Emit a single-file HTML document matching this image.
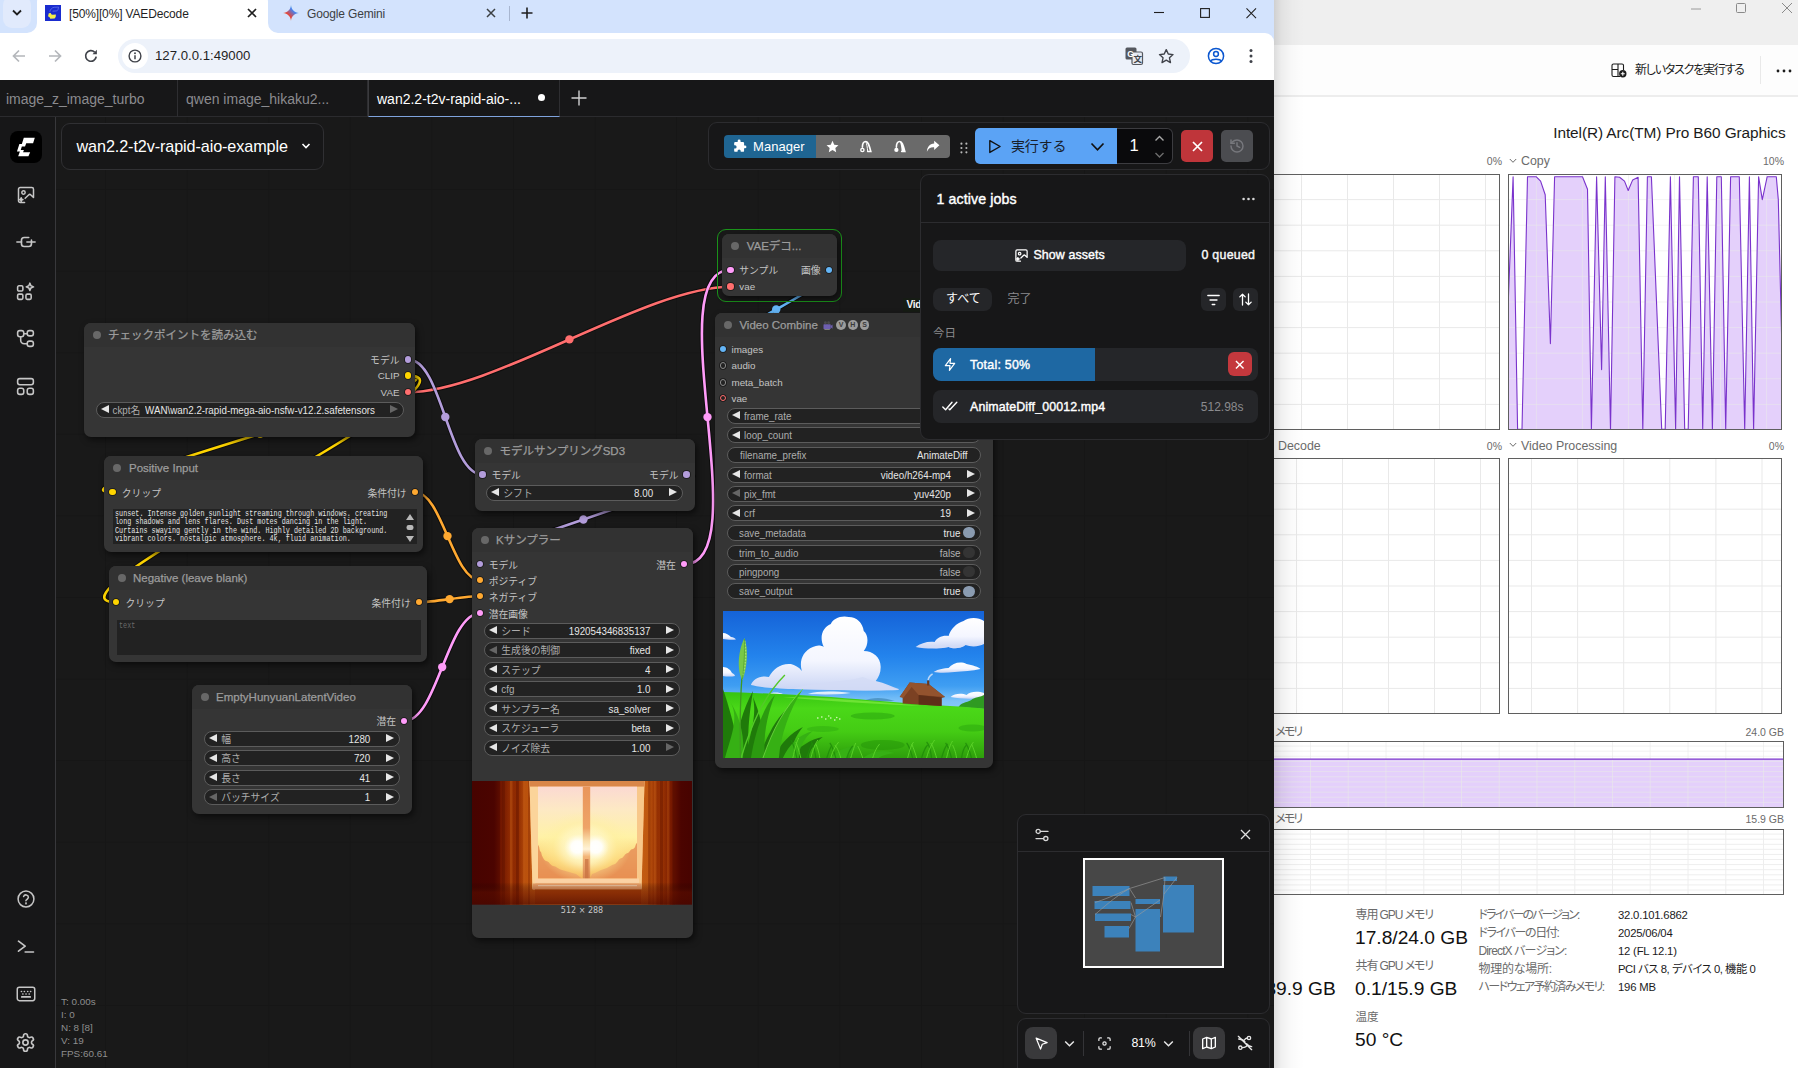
<!DOCTYPE html>
<html lang="ja">
<head>
<meta charset="utf-8">
<title>[50%][0%] VAEDecode</title>
<style>
*{box-sizing:border-box;margin:0;padding:0}
html,body{width:1798px;height:1068px;overflow:hidden;background:#fff}
body{font-family:"Liberation Sans","Noto Sans CJK JP",sans-serif;position:relative;color:#ddd}
.abs{position:absolute}
svg{position:absolute;overflow:visible}
/* ---------- chrome browser ---------- */
#browser{position:absolute;left:0;top:0;width:1274px;height:1068px;overflow:hidden;background:#191919}
#tabstrip{position:absolute;left:0;top:0;width:1274px;height:46px;background:#d3e3fd}
#navbar{position:absolute;left:0;top:33px;width:1274px;height:47px;background:#fff;border-radius:0 0 0 0}
#omni{position:absolute;left:118px;top:39px;width:1072px;height:34px;border-radius:17px;background:#edf2fa}
.ctab{position:absolute;top:0;height:33px;font-size:12px;letter-spacing:-.15px;color:#1f1f1f;line-height:28px;white-space:nowrap}
/* ---------- comfy ---------- */
#ctabs{position:absolute;left:0;top:80px;width:1274px;height:37px;background:#171718;border-bottom:1px solid #2b2b2e}
.wtab{position:absolute;top:0;height:37px;line-height:38px;font-size:14px;color:#8b8b8f;white-space:nowrap;border-right:1px solid #2e2e31}
#side{position:absolute;left:0;top:117px;width:56px;height:951px;background:#171718;border-right:1px solid #38383b}
#canvas{position:absolute;left:56px;top:117px;width:1218px;height:951px;background:#191919;overflow:hidden}
.ta{background:#222;overflow:hidden}
.mono{position:absolute;left:2px;top:1px;font-family:"Liberation Mono",monospace;font-size:9.2px;line-height:8.3px;color:#e4e4e4;white-space:nowrap;transform:scaleX(.7375);transform-origin:0 0}
.node{position:absolute;background:#353535;border-radius:7px;box-shadow:2px 3px 6px rgba(0,0,0,.55)}
.nh{position:absolute;left:0;top:0;right:0;height:24px;background:#323232;border-radius:7px 7px 0 0;font-size:11.5px;color:#9c9c9c;-webkit-text-stroke:.25px #9c9c9c;line-height:24px;white-space:nowrap}
.nh i{position:absolute;left:9px;top:8px;width:8px;height:8px;border-radius:50%;background:#686868}
.nh span{position:absolute;left:25px;top:0}
.w{position:absolute;height:16px;border-radius:8px;background:#222;border:1px solid #5c5c5c;font-size:9.8px;line-height:15.6px;color:#adadad;white-space:nowrap}
.w span{transform:scaleY(1.1);transform-origin:50% 56%}
.w .l{position:absolute;left:14px;top:0}
.w .v{position:absolute;right:24px;top:0;color:#e6e6e6}
.w .al,.w .ar{position:absolute;top:2.4px;width:0;height:0;border-top:4.6px solid transparent;border-bottom:4.6px solid transparent}
.w .al{left:4px;border-right:8.4px solid #e6e6e6}
.w .ar{right:4.6px;border-left:8.4px solid #e6e6e6}
.w .dim{opacity:.35}
.slot{position:absolute;font-size:9.8px;color:#c4c4c4;line-height:12px;white-space:nowrap}
.dot{position:absolute;width:6.4px;height:6.4px;border-radius:50%;box-shadow:0 0 0 .8px rgba(0,0,0,.55)}
/* ---------- task manager ---------- */
#tm{position:absolute;left:1274px;top:0;width:524px;height:1068px;background:#fff;overflow:hidden;color:#1b1b1b;font-family:"Liberation Sans","Noto Sans CJK JP",sans-serif}
#tmtitle{position:absolute;left:0;top:0;width:524px;height:45px;background:#efefef}
#tmbar{position:absolute;left:0;top:45px;width:524px;height:52px;background:#fdfdfd;border-bottom:2px solid #ededed}
.tl{position:absolute;white-space:nowrap}
.chart{position:absolute;border:1px solid #5f5f5f;background:#fff;overflow:hidden}
.sb{-webkit-text-stroke:.35px currentColor}
</style>
</head>
<body>
<div id="browser">

  <div id="tabstrip">
    <div class="abs" style="left:3px;top:-4px;width:28px;height:32px;border-radius:9px;background:#e1eafc"></div>
    <svg style="left:11px;top:8px" width="12" height="10" viewBox="0 0 12 10"><path d="M2 2.5 L6 6.5 L10 2.5" fill="none" stroke="#1f1f1f" stroke-width="1.8"/></svg>
    <!-- active tab -->
    <div class="abs" style="left:37px;top:-8px;width:231px;height:41px;border-radius:10px 10px 0 0;background:#fff"></div>
    <svg style="left:27px;top:23px" width="10" height="10"><path d="M10 0 V10 H0 A10 10 0 0 0 10 0Z" fill="#fff"/></svg>
    <svg style="left:268px;top:23px" width="10" height="10"><path d="M0 0 V10 H10 A10 10 0 0 1 0 0Z" fill="#fff"/></svg>
    <!-- favicon -->
    <svg style="left:45px;top:5px" width="16" height="16" viewBox="0 0 16 16"><rect width="16" height="16" fill="#1a2ccf"/><path d="M3.800 8.300 L5.800 8 L6.200 9.300 L7.600 9.700 L10.900 9.600 L10.700 12 L9.600 13.600 L5.300 13.800 L4.600 12.200 L3 11.200 Z" fill="#f2ee4a"/><path d="M4.800 6.800 C5.400 4.400 6.800 2.600 9.200 2.300 L13.600 2.100 L13 4.600 C12.500 5.800 11.600 6 10.200 6 L7.600 6.200" fill="none" stroke="#5f70ea" stroke-width=".8"/></svg>
    <div class="ctab" style="left:69px">[50%][0%] VAEDecode</div>
    <svg style="left:247px;top:8px" width="10" height="10" viewBox="0 0 10 10"><path d="M1 1 L9 9 M9 1 L1 9" stroke="#1f1f1f" stroke-width="1.7"/></svg>
    <!-- gemini tab -->
    <svg style="left:283px;top:5px" width="16" height="16" viewBox="0 0 16 16"><defs><linearGradient id="gg" x1="0" y1="1" x2="1" y2="0"><stop offset="0" stop-color="#f4b400"/><stop offset=".35" stop-color="#ea4335"/><stop offset=".65" stop-color="#4285f4"/><stop offset="1" stop-color="#34a853"/></linearGradient></defs><path d="M8 0 C8.4 4.6 11.4 7.6 16 8 C11.4 8.4 8.4 11.4 8 16 C7.6 11.4 4.6 8.4 0 8 C4.6 7.6 7.6 4.6 8 0Z" fill="url(#gg)"/></svg>
    <div class="ctab" style="left:307px;color:#3c4043">Google Gemini</div>
    <svg style="left:486px;top:8px" width="10" height="10" viewBox="0 0 10 10"><path d="M1 1 L9 9 M9 1 L1 9" stroke="#3c4043" stroke-width="1.5"/></svg>
    <div class="abs" style="left:509px;top:6px;width:1px;height:15px;background:#a8b6d0"></div>
    <svg style="left:521px;top:7px" width="12" height="12" viewBox="0 0 12 12"><path d="M6 0.5 V11.5 M0.5 6 H11.5" stroke="#1f1f1f" stroke-width="1.6"/></svg>
    <!-- window controls -->
    <svg style="left:1154px;top:7px" width="10" height="10" viewBox="0 0 10 10"><path d="M0 5.5 H10" stroke="#1f1f1f" stroke-width="1.1"/></svg>
    <svg style="left:1200px;top:8px" width="10" height="10" viewBox="0 0 10 10"><rect x=".6" y=".6" width="8.8" height="8.8" fill="none" stroke="#1f1f1f" stroke-width="1.1"/></svg>
    <svg style="left:1245.500px;top:7.500px" width="10.500" height="10.500" viewBox="0 0 11 11"><path d="M.5 .5 L10.5 10.5 M10.5 .5 L.5 10.5" stroke="#1f1f1f" stroke-width="1.1"/></svg>
  </div>
  <div id="navbar" style="border-radius:0 9px 0 0">
    <svg style="left:12px;top:16px" width="14" height="14" viewBox="0 0 14 14"><path d="M13 7 H2 M7 1.5 L1.5 7 L7 12.5" fill="none" stroke="#b4b7bb" stroke-width="1.7"/></svg>
    <svg style="left:48px;top:16px" width="14" height="14" viewBox="0 0 14 14"><path d="M1 7 H12 M7 1.5 L12.5 7 L7 12.5" fill="none" stroke="#b4b7bb" stroke-width="1.7"/></svg>
    <svg style="left:84px;top:16px" width="14" height="14" viewBox="0 0 14 14"><path d="M12.2 7.6 A5.3 5.3 0 1 1 10.6 3.1" fill="none" stroke="#40434a" stroke-width="1.7"/><path d="M12.9 0.8 V5.2 H8.5Z" fill="#40434a"/></svg>
  </div>
  <div id="omni">
    <div class="abs" style="left:4px;top:4px;width:26px;height:26px;border-radius:50%;background:#fff"></div>
    <svg style="left:10px;top:10px" width="14" height="14" viewBox="0 0 14 14"><circle cx="7" cy="7" r="5.9" fill="none" stroke="#40434a" stroke-width="1.4"/><path d="M7 6.3 V10.2" stroke="#40434a" stroke-width="1.5"/><circle cx="7" cy="4.2" r=".95" fill="#40434a"/></svg>
    <div class="abs" style="left:37px;top:0;line-height:34px;font-size:13.2px;color:#1f1f1f">127.0.0.1:49000</div>
    <!-- translate icon -->
    <svg style="left:1007px;top:8px" width="18" height="18" viewBox="0 0 18 18"><rect x="0.5" y="0.5" width="11" height="12" rx="1.5" fill="#55585e"/><rect x="7" y="5" width="10.5" height="12.5" rx="1.5" fill="#e6eaf2" stroke="#55585e" stroke-width="1.200"/><text x="2.2" y="10" font-size="8.5" font-weight="700" fill="#fff" font-family="Liberation Sans,sans-serif">G</text><text x="8.6" y="15" font-size="8.5" font-weight="700" fill="#44474c" font-family="Noto Sans CJK JP,sans-serif">文</text></svg>
    <svg style="left:1039.800px;top:8.800px" width="16.500" height="16.500" viewBox="0 0 18 18"><path d="M9 1.8 L11.2 6.6 L16.4 7.2 L12.5 10.7 L13.6 15.9 L9 13.2 L4.4 15.9 L5.5 10.7 L1.6 7.2 L6.8 6.6Z" fill="none" stroke="#40434a" stroke-width="1.5" stroke-linejoin="round"/></svg>
  </div>
  <svg style="left:1207px;top:47px" width="18" height="18" viewBox="0 0 18 18"><circle cx="9" cy="9" r="7.6" fill="none" stroke="#0b57d0" stroke-width="1.5"/><circle cx="9" cy="7" r="2.4" fill="none" stroke="#0b57d0" stroke-width="1.5"/><path d="M3.8 14.2 C5 11.6 13 11.6 14.2 14.2" fill="none" stroke="#0b57d0" stroke-width="1.5"/></svg>
  <svg style="left:1249px;top:48px" width="4" height="16" viewBox="0 0 4 16"><circle cx="2" cy="2.5" r="1.5" fill="#40434a"/><circle cx="2" cy="8" r="1.5" fill="#40434a"/><circle cx="2" cy="13.5" r="1.5" fill="#40434a"/></svg>
  <div id="ctabs">
    <div class="wtab" style="left:0;width:178px;padding-left:6px">image_z_image_turbo</div>
    <div class="wtab" style="left:178px;width:190px;padding-left:8px">qwen image_hikaku2...</div>
    <div class="wtab" style="left:368px;width:192px;padding-left:8px;color:#fff;background:#171718;border-bottom:1px solid #7fa3dd;box-shadow:0 1px 0 #1f3f6b;border-left:1px solid #3a3a3d">wan2.2-t2v-rapid-aio-...</div>
    <div class="abs" style="left:538px;top:14px;width:7px;height:7px;border-radius:50%;background:#fff"></div>
    <svg style="left:571px;top:10px" width="16" height="16" viewBox="0 0 16 16"><path d="M8 .5 V15.5 M.5 8 H15.5" stroke="#d0d0d0" stroke-width="1.4"/></svg>
  </div>
<div id="canvas"><div class="abs" style="left:-56px;top:-117px;width:1274px;height:1068px"><div class="abs" style="left:56px;top:117px;width:1218px;height:951px;background-image:linear-gradient(to right,#161616 1px,transparent 1px),linear-gradient(to bottom,#161616 1px,transparent 1px);background-size:81.6px 81.6px;background-position:49px 72px"></div><svg style="left:0;top:0" width="1274" height="1068"><path d="M408.0 392.2 C492.9 392.2 645.8 286.7 730.7 286.7" fill="none" stroke="rgba(0,0,0,.5)" stroke-width="4.6"/><path d="M408.0 392.2 C492.9 392.2 645.8 286.7 730.7 286.7" fill="none" stroke="#ff6e6e" stroke-width="2.6"/><circle cx="569.4" cy="339.4" r="4.2" fill="#ff6e6e"/><path d="M408.0 359.4 C442.3 359.4 448.3 474.6 482.6 474.6" fill="none" stroke="rgba(0,0,0,.5)" stroke-width="4.6"/><path d="M408.0 359.4 C442.3 359.4 448.3 474.6 482.6 474.6" fill="none" stroke="#b39ddb" stroke-width="2.6"/><circle cx="445.3" cy="417.0" r="4.2" fill="#b39ddb"/><path d="M408.0 375.6 C487.4 375.6 33.1 492.0 112.5 492.0" fill="none" stroke="rgba(0,0,0,.5)" stroke-width="4.6"/><path d="M408.0 375.6 C487.4 375.6 33.1 492.0 112.5 492.0" fill="none" stroke="#ffd500" stroke-width="2.6"/><circle cx="260.2" cy="433.8" r="4.2" fill="#ffd500"/><path d="M408.0 375.6 C500.4 375.6 23.8 602.2 116.2 602.2" fill="none" stroke="rgba(0,0,0,.5)" stroke-width="4.6"/><path d="M408.0 375.6 C500.4 375.6 23.8 602.2 116.2 602.2" fill="none" stroke="#ffd500" stroke-width="2.6"/><circle cx="262.1" cy="488.9" r="4.2" fill="#ffd500"/><path d="M414.8 492.0 C442.3 492.0 452.7 580.2 480.2 580.2" fill="none" stroke="rgba(0,0,0,.5)" stroke-width="4.6"/><path d="M414.8 492.0 C442.3 492.0 452.7 580.2 480.2 580.2" fill="none" stroke="#ffa931" stroke-width="2.6"/><circle cx="447.5" cy="536.1" r="4.2" fill="#ffa931"/><path d="M419.0 602.2 C434.4 602.2 464.8 596.0 480.2 596.0" fill="none" stroke="rgba(0,0,0,.5)" stroke-width="4.6"/><path d="M419.0 602.2 C434.4 602.2 464.8 596.0 480.2 596.0" fill="none" stroke="#ffa931" stroke-width="2.6"/><circle cx="449.6" cy="599.1" r="4.2" fill="#ffa931"/><path d="M404.3 721.0 C437.3 721.0 447.2 613.2 480.2 613.2" fill="none" stroke="rgba(0,0,0,.5)" stroke-width="4.6"/><path d="M404.3 721.0 C437.3 721.0 447.2 613.2 480.2 613.2" fill="none" stroke="#ff9cf9" stroke-width="2.6"/><circle cx="442.2" cy="667.1" r="4.2" fill="#ff9cf9"/><path d="M686.6 474.6 C742.9 474.6 423.9 564.3 480.2 564.3" fill="none" stroke="rgba(0,0,0,.5)" stroke-width="4.6"/><path d="M686.6 474.6 C742.9 474.6 423.9 564.3 480.2 564.3" fill="none" stroke="#b39ddb" stroke-width="2.6"/><circle cx="583.4" cy="519.5" r="4.2" fill="#b39ddb"/><path d="M684.3 564.3 C758.8 564.3 656.2 269.8 730.7 269.8" fill="none" stroke="rgba(0,0,0,.5)" stroke-width="4.6"/><path d="M684.3 564.3 C758.8 564.3 656.2 269.8 730.7 269.8" fill="none" stroke="#ff9cf9" stroke-width="2.6"/><circle cx="707.5" cy="417.1" r="4.2" fill="#ff9cf9"/><path d="M829.2 269.8 C862.3 269.8 690.1 349.2 723.2 349.2" fill="none" stroke="rgba(0,0,0,.5)" stroke-width="4.6"/><path d="M829.2 269.8 C862.3 269.8 690.1 349.2 723.2 349.2" fill="none" stroke="#64b5f6" stroke-width="2.6"/><circle cx="776.2" cy="309.5" r="4.2" fill="#64b5f6"/></svg><div class="node" style="left:84px;top:323px;width:331px;height:114px"><div class="nh"><i></i><span style="left:24px">チェックポイントを読み込む</span></div><div class="dot" style="left:320.8px;top:33.2px;background:#b39ddb"></div><div class="dot" style="left:320.8px;top:49.4px;background:#ffd500"></div><div class="dot" style="left:320.8px;top:66.0px;background:#ff6e6e"></div><div class="slot" style="right:15.5px;top:31.9px">モデル</div><div class="slot" style="right:15.5px;top:47.3px">CLIP</div><div class="slot" style="right:15.5px;top:63.9px">VAE</div><div class="w" style="left:11.5px;top:78.6px;width:308.0px;height:16px"><b class="al"></b><span class="l" style="left:16px">ckpt名</span><span class="v" style="right:27.5px">WAN\wan2.2-rapid-mega-aio-nsfw-v12.2.safetensors</span><b class="ar dim"></b></div></div><div class="node" style="left:104px;top:456px;width:319px;height:96px"><div class="nh"><i></i><span style="left:25px">Positive Input</span></div><div class="dot" style="left:5.3px;top:32.8px;background:#ffd500"></div><div class="slot" style="left:17.799999999999997px;top:31.5px">クリップ</div><div class="dot" style="left:307.6px;top:32.8px;background:#ffa931"></div><div class="slot" style="right:16.4px;top:31.5px">条件付け</div><div class="abs ta" style="left:8.5px;top:53px;width:304px;height:35px"><div class="mono">sunset. Intense golden sunlight streaming through windows. creating<br>long shadows and lens flares. Dust motes dancing in the light.<br>Curtains swaying gently in the wind. Highly detailed 2D background.<br>vibrant colors. nostalgic atmosphere. 4k, fluid animation.</div><svg style="left:292px;top:4px" width="10" height="30" viewBox="0 0 10 30"><path d="M5 1 L9 7 H1Z M5 29 L9 23 H1Z" fill="#b8b8b8"/><rect x="1.5" y="12" width="7" height="5" rx="2.2" fill="#b8b8b8"/></svg></div></div><div class="node" style="left:109px;top:566.4px;width:318px;height:96px"><div class="nh"><i></i><span style="left:24px">Negative (leave blank)</span></div><div class="dot" style="left:4.0px;top:32.6px;background:#ffd500"></div><div class="slot" style="left:16.5px;top:31.3px">クリップ</div><div class="dot" style="left:306.8px;top:32.6px;background:#ffa931"></div><div class="slot" style="right:16.3px;top:31.3px">条件付け</div><div class="abs ta" style="left:8px;top:53.5px;width:304px;height:35px"><div class="mono" style="color:#6a6a6a;left:2px;top:2px">text</div></div></div><div class="node" style="left:192px;top:685.4px;width:220px;height:129px"><div class="nh"><i></i><span style="left:24px">EmptyHunyuanLatentVideo</span></div><div class="dot" style="left:209.1px;top:32.4px;background:#ff9cf9"></div><div class="slot" style="right:16.0px;top:31.1px">潜在</div><div class="w" style="left:12.2px;top:45.2px;width:195.6px;height:16px"><b class="al"></b><span class="l" style="left:16px">幅</span><span class="v" style="right:28.5px">1280</span><b class="ar"></b></div><div class="w" style="left:12.2px;top:64.8px;width:195.6px;height:16px"><b class="al"></b><span class="l" style="left:16px">高さ</span><span class="v" style="right:28.5px">720</span><b class="ar"></b></div><div class="w" style="left:12.2px;top:84.4px;width:195.6px;height:16px"><b class="al"></b><span class="l" style="left:16px">長さ</span><span class="v" style="right:28.5px">41</span><b class="ar"></b></div><div class="w" style="left:12.2px;top:104.0px;width:195.6px;height:16px"><b class="al dim"></b><span class="l" style="left:16px">バッチサイズ</span><span class="v" style="right:28.5px">1</span><b class="ar"></b></div></div><div class="node" style="left:474.5px;top:438.5px;width:220px;height:72px"><div class="nh"><i></i><span style="left:25px">モデルサンプリングSD3</span></div><div class="dot" style="left:4.9px;top:32.9px;background:#b39ddb"></div><div class="slot" style="left:16.899999999999977px;top:31.6px">モデル</div><div class="dot" style="left:208.9px;top:32.9px;background:#b39ddb"></div><div class="slot" style="right:16.0px;top:31.6px">モデル</div><div class="w" style="left:11.8px;top:46.3px;width:196.3px;height:16px"><b class="al"></b><span class="l" style="left:16px">シフト</span><span class="v" style="right:28.5px">8.00</span><b class="ar"></b></div></div><div class="node" style="left:472px;top:528px;width:220.5px;height:409.5px"><div class="nh"><i></i><span style="left:24px">Kサンプラー</span></div><div class="dot" style="left:5.0px;top:33.1px;background:#b39ddb"></div><div class="slot" style="left:16.69999999999999px;top:31.8px">モデル</div><div class="dot" style="left:5.0px;top:49.0px;background:#ffa931"></div><div class="slot" style="left:16.69999999999999px;top:47.7px">ポジティブ</div><div class="dot" style="left:5.0px;top:64.8px;background:#ffa931"></div><div class="slot" style="left:16.69999999999999px;top:63.5px">ネガティブ</div><div class="dot" style="left:5.0px;top:82.0px;background:#ff9cf9"></div><div class="slot" style="left:16.69999999999999px;top:80.7px">潜在画像</div><div class="dot" style="left:209.1px;top:33.1px;background:#ff9cf9"></div><div class="slot" style="right:16.7px;top:31.8px">潜在</div><div class="w" style="left:12.3px;top:94.8px;width:195.6px;height:16px"><b class="al"></b><span class="l" style="left:16px">シード</span><span class="v" style="right:28.4px">192054346835137</span><b class="ar"></b></div><div class="w" style="left:12.3px;top:114.3px;width:195.6px;height:16px"><b class="al dim"></b><span class="l" style="left:16px">生成後の制御</span><span class="v" style="right:28.4px">fixed</span><b class="ar"></b></div><div class="w" style="left:12.3px;top:133.8px;width:195.6px;height:16px"><b class="al"></b><span class="l" style="left:16px">ステップ</span><span class="v" style="right:28.4px">4</span><b class="ar"></b></div><div class="w" style="left:12.3px;top:153.3px;width:195.6px;height:16px"><b class="al"></b><span class="l" style="left:16px">cfg</span><span class="v" style="right:28.4px">1.0</span><b class="ar"></b></div><div class="w" style="left:12.3px;top:172.8px;width:195.6px;height:16px"><b class="al"></b><span class="l" style="left:16px">サンプラー名</span><span class="v" style="right:28.4px">sa_solver</span><b class="ar"></b></div><div class="w" style="left:12.3px;top:192.3px;width:195.6px;height:16px"><b class="al"></b><span class="l" style="left:16px">スケジューラ</span><span class="v" style="right:28.4px">beta</span><b class="ar"></b></div><div class="w" style="left:12.3px;top:211.8px;width:195.6px;height:16px"><b class="al"></b><span class="l" style="left:16px">ノイズ除去</span><span class="v" style="right:28.4px">1.00</span><b class="ar dim"></b></div><svg style="left:0;top:252.5px" width="220" height="123.500" viewBox="0 0 220 123.500">
<defs>
<linearGradient id="sw" x1="0" x2="1"><stop offset="0" stop-color="#470300"/><stop offset=".1" stop-color="#4b0400"/><stop offset=".17" stop-color="#7a1c00"/><stop offset=".235" stop-color="#a63c04"/><stop offset=".285" stop-color="#d26a18"/><stop offset=".5" stop-color="#f2a050"/><stop offset=".765" stop-color="#d8701c"/><stop offset=".83" stop-color="#a84006"/><stop offset=".9" stop-color="#6e1400"/><stop offset=".95" stop-color="#4b0400"/><stop offset="1" stop-color="#470300"/></linearGradient>
<linearGradient id="sg" x1="0" y1="0" x2="0" y2="1"><stop offset="0" stop-color="#fbd9d2"/><stop offset=".25" stop-color="#fde9c4"/><stop offset=".55" stop-color="#fff2a6"/><stop offset=".8" stop-color="#fbd070"/><stop offset="1" stop-color="#f2a64a"/></linearGradient>
<radialGradient id="ss" cx=".5" cy=".5" r=".5"><stop offset="0" stop-color="#fff" stop-opacity="1"/><stop offset=".35" stop-color="#fffbe0" stop-opacity=".95"/><stop offset=".7" stop-color="#fff0a0" stop-opacity=".4"/><stop offset="1" stop-color="#fff0a0" stop-opacity="0"/></radialGradient>
<linearGradient id="sf" x1="0" y1="0" x2="0" y2="1"><stop offset="0" stop-color="#000" stop-opacity="0"/><stop offset=".82" stop-color="#000" stop-opacity="0"/><stop offset=".9" stop-color="#5a1000" stop-opacity=".45"/><stop offset="1" stop-color="#4a0800" stop-opacity=".7"/></linearGradient>
<linearGradient id="sc" x1="0" x2="1"><stop offset="0" stop-color="#7a1a00"/><stop offset=".3" stop-color="#a23804"/><stop offset=".5" stop-color="#8a2600"/><stop offset=".75" stop-color="#c25a10"/><stop offset="1" stop-color="#b04a0a"/></linearGradient>
<linearGradient id="sm" x1="0" y1="0" x2="0" y2="1"><stop offset="0" stop-color="#e9955a"/><stop offset=".45" stop-color="#eea468"/><stop offset=".6" stop-color="#fbe2b0"/><stop offset=".68" stop-color="#fff3d8"/><stop offset=".76" stop-color="#f3b578"/><stop offset="1" stop-color="#d98650"/></linearGradient>
<radialGradient id="sw2" cx=".5" cy=".5" r=".5"><stop offset="0" stop-color="#fff" stop-opacity="1"/><stop offset=".45" stop-color="#fff" stop-opacity=".9"/><stop offset="1" stop-color="#fffbe0" stop-opacity="0"/></radialGradient>
</defs>
<rect width="220" height="123.500" fill="url(#sw)"/>
<rect x="28" y="0" width="35" height="123.500" fill="url(#sc)" opacity=".55"/>
<g transform="translate(220,0) scale(-1,1)"><rect x="19" y="0" width="33" height="123.500" fill="url(#sc)" opacity=".55"/></g>
<g opacity=".35"><rect x="30" y="0" width="3" height="123.500" fill="#5a1000"/><rect x="38" y="0" width="2.5" height="123.500" fill="#d0681c"/><rect x="44" y="0" width="3" height="123.500" fill="#5a1000"/><rect x="51" y="0" width="2.5" height="123.500" fill="#d0681c"/><rect x="56" y="0" width="2" height="123.500" fill="#7a2000"/><rect x="176" y="0" width="2.5" height="123.500" fill="#7a2000"/><rect x="182" y="0" width="2.5" height="123.500" fill="#d0681c"/><rect x="188" y="0" width="3" height="123.500" fill="#5a1000"/><rect x="195" y="0" width="2.5" height="123.500" fill="#c05a14"/><rect x="200" y="0" width="3" height="123.500" fill="#5a1000"/></g>
<!-- frame -->
<path d="M57.500 0 H172.500 L169.500 108.500 H60.500Z" fill="#f3a660"/>
<path d="M57.500 0 L66 5.600 V97.500 L60.500 108.500Z" fill="#fbd49a"/>
<path d="M172.500 0 L165 5.600 V97.500 L169.500 108.500Z" fill="#f8c88a"/>
<rect x="57.500" y="0" width="115" height="5.600" fill="#d98648"/>
<rect x="66" y="5.600" width="99" height="92" fill="url(#sg)"/>
<!-- trees -->
<path d="M66 97.500 V64 C68 66 67 70 69 71 C70 76 72 79 74 80 C77 80 78 84 81 85 C84 85 86 88 90 89 C95 90 99 92 104 93 L110 97.500Z" fill="#e58a55" opacity=".8"/>
<path d="M165 97.500 V62 C163 63 164 67 161 68 C158 68 158 71 156 72 C153 72 152 76 150 77 C147 77 146 81 143 83 C139 84 136 87 132 88 C128 89 124 92 120 93 L118 97.500Z" fill="#e58a55" opacity=".8"/>
<ellipse cx="113" cy="66" rx="46" ry="36" fill="url(#ss)"/>
<ellipse cx="113" cy="66" rx="24" ry="20" fill="url(#ss)"/>
<!-- mullion -->
<ellipse cx="105" cy="66" rx="13" ry="13" fill="url(#sw2)"/><ellipse cx="124" cy="66" rx="13" ry="13" fill="url(#sw2)"/><rect x="110.800" y="5.600" width="7.400" height="92" fill="url(#sm)"/>

<rect x="113" y="78" width="3.500" height="19.500" fill="#c87040" opacity=".7"/>
<!-- sill -->
<rect x="63" y="97.500" width="104" height="5" fill="#fbd2a4"/>
<rect x="61" y="102.500" width="108" height="6" fill="#f1a56c"/>
<rect x="66" y="104" width="99" height="1.200" fill="#fbe0c0" opacity=".7"/>
<!-- below -->
<rect x="63" y="108.500" width="106" height="15" fill="#b3480a"/>
<rect x="0" y="0" width="220" height="123.500" fill="url(#sf)"/>
</svg>
<div class="abs" style="left:0;width:220px;text-align:center;top:378px;font-size:8px;color:#c8c8c8;line-height:10px;font-family:'DejaVu Sans','Liberation Sans',sans-serif">512 × 288</div></div><div class="abs" style="left:717px;top:229px;width:124.500px;height:72.500px;border:1.500px solid #1b941b;border-radius:9px"></div><div class="node" style="left:721.7px;top:234.2px;width:115px;height:62px"><div class="nh"><i></i><span style="left:25px">VAEデコ...</span></div><div class="dot" style="left:5.8px;top:32.4px;background:#ff9cf9"></div><div class="slot" style="left:17.59999999999991px;top:31.1px">サンプル</div><div class="dot" style="left:5.8px;top:49.3px;background:#ff6e6e"></div><div class="slot" style="left:17.59999999999991px;top:47.2px">vae</div><div class="dot" style="left:104.3px;top:32.4px;background:#64b5f6"></div><div class="slot" style="right:16.1px;top:31.1px">画像</div></div><div class="abs" style="left:903px;top:297.600px;width:30px;height:14px;background:#161c14;font-size:10.200px;font-weight:700;color:#f4f4f4;line-height:14px;padding-left:3.400px;letter-spacing:-.3px">Vid</div><div class="node" style="left:715px;top:312.8px;width:277.5px;height:454.8px"><div class="nh"><i></i><span style="left:24.4px">Video Combine</span><svg style="left:108px;top:8.500px" width="10" height="9" viewBox="0 0 11 10"><rect x=".5" y="3.500" width="8" height="5.500" rx=".8" fill="#6e5fb0"/><path d="M8.500 5.500 L10.500 4 V8.500 L8.500 7Z" fill="#6e5fb0"/><circle cx="2.600" cy="2" r="1.600" fill="#4a4a4a"/><circle cx="6.200" cy="2" r="1.600" fill="#4a4a4a"/><rect x="1.500" y="9" width="6" height="1" fill="#888"/></svg><span class="abs" style="left:121.3px;top:7.400px;width:9.800px;height:9.800px;border-radius:50%;background:#9c9c9c;color:#3a3a3a;font-size:7px;font-weight:700;line-height:10.800px;text-align:center;-webkit-text-stroke:0">V</span><span class="abs" style="left:132.9px;top:7.400px;width:9.800px;height:9.800px;border-radius:50%;background:#9c9c9c;color:#3a3a3a;font-size:7px;font-weight:700;line-height:10.800px;text-align:center;-webkit-text-stroke:0">H</span><span class="abs" style="left:144.6px;top:7.400px;width:9.800px;height:9.800px;border-radius:50%;background:#9c9c9c;color:#3a3a3a;font-size:7px;font-weight:700;line-height:10.800px;text-align:center;-webkit-text-stroke:0">S</span></div><div class="dot" style="left:5.0px;top:33.2px;background:#64b5f6"></div><div class="slot" style="left:16.5px;top:31.1px">images</div><div class="dot" style="left:5.0px;top:49.7px;border:1.800px solid #8a8a8a;background:#222"></div><div class="slot" style="left:16.5px;top:47.6px">audio</div><div class="dot" style="left:5.0px;top:66.5px;border:1.800px solid #8a8a8a;background:#222"></div><div class="slot" style="left:16.5px;top:64.4px">meta_batch</div><div class="dot" style="left:5.0px;top:82.3px;border:1.800px solid #ff6e6e;background:#222"></div><div class="slot" style="left:16.5px;top:80.2px">vae</div><div class="w" style="left:12.0px;top:95.1px;width:254.0px;height:16px"><b class="al"></b><span class="l" style="left:16px">frame_rate</span><span class="v" style="right:24px"></span></div><div class="w" style="left:12.0px;top:114.6px;width:254.0px;height:16px"><b class="al"></b><span class="l" style="left:16px">loop_count</span><span class="v" style="right:24px"></span></div><div class="w" style="left:12.0px;top:134.0px;width:254.0px;height:16px"><span class="l" style="left:12px">filename_prefix</span><span class="v" style="right:12.5px">AnimateDiff</span></div><div class="w" style="left:12.0px;top:153.9px;width:254.0px;height:16px"><b class="al"></b><span class="l" style="left:16px">format</span><span class="v" style="right:29px">video/h264-mp4</span><b class="ar"></b></div><div class="w" style="left:12.0px;top:173.2px;width:254.0px;height:16px"><b class="al dim"></b><span class="l" style="left:16px">pix_fmt</span><span class="v" style="right:29px">yuv420p</span><b class="ar"></b></div><div class="w" style="left:12.0px;top:192.7px;width:254.0px;height:16px"><b class="al"></b><span class="l" style="left:16px">crf</span><span class="v" style="right:29px">19</span><b class="ar"></b></div><div class="w" style="left:12.0px;top:211.9px;width:254.0px"><span class="l" style="left:11px">save_metadata</span><span class="v" style="right:19.500px;color:#e6e6e6">true</span><i class="abs" style="right:5.400px;top:1.200px;width:11.600px;height:11.600px;border-radius:50%;background:#8a9bb0"></i></div><div class="w" style="left:12.0px;top:231.8px;width:254.0px"><span class="l" style="left:11px">trim_to_audio</span><span class="v" style="right:19.500px;color:#b2b2b2">false</span><i class="abs" style="right:5.400px;top:1.200px;width:11.600px;height:11.600px;border-radius:50%;background:#343434"></i></div><div class="w" style="left:12.0px;top:250.9px;width:254.0px"><span class="l" style="left:11px">pingpong</span><span class="v" style="right:19.500px;color:#b2b2b2">false</span><i class="abs" style="right:5.400px;top:1.200px;width:11.600px;height:11.600px;border-radius:50%;background:#343434"></i></div><div class="w" style="left:12.0px;top:270.7px;width:254.0px"><span class="l" style="left:11px">save_output</span><span class="v" style="right:19.500px;color:#e6e6e6">true</span><i class="abs" style="right:5.400px;top:1.200px;width:11.600px;height:11.600px;border-radius:50%;background:#8a9bb0"></i></div><svg style="left:8.100px;top:298.200px" width="261" height="147" viewBox="0 0 261.500 147" preserveAspectRatio="none">
<defs>
<linearGradient id="ms" x1="0" y1="0" x2="0" y2="1"><stop offset="0" stop-color="#1563d8"/><stop offset=".45" stop-color="#2383ec"/><stop offset=".75" stop-color="#3f9ef2"/><stop offset=".9" stop-color="#7cc2f8"/><stop offset="1" stop-color="#8ccaf9"/></linearGradient>
<linearGradient id="mg" x1="0" y1="0" x2="0" y2="1"><stop offset="0" stop-color="#36c412"/><stop offset=".25" stop-color="#4ad818"/><stop offset=".6" stop-color="#44cc14"/><stop offset="1" stop-color="#2e9e0c"/></linearGradient>
<linearGradient id="mc" x1="0" y1="0" x2="0" y2="1"><stop offset="0" stop-color="#fff"/><stop offset=".6" stop-color="#f4f6ff"/><stop offset="1" stop-color="#c9d4f4"/></linearGradient>
<clipPath id="mclip"><rect width="261.500" height="147"/></clipPath>
</defs>
<g clip-path="url(#mclip)">
<rect width="261.500" height="100" fill="url(#ms)"/>
<!-- far haze -->

<!-- big cloud -->
<g fill="url(#mc)">
<path d="M28 74 C30 68 38 64 46 66 C50 58 58 52 68 53 C72 54 76 56 79 60 C76 50 80 40 90 36 C94 34 98 34 101 36 C96 26 100 16 108 13 C110 8 118 4 126 6 C134 6 140 12 141 20 C146 24 146 34 141 40 C150 40 158 46 158 56 C158 62 156 66 153 70 C162 72 170 76 176 78 L176 79 C150 80 110 79 70 78 C50 78 36 76 28 74Z"/>
<path d="M193 36 C198 32 206 30 212 31 C214 27 220 24 226 25 C228 18 234 12 241 10 C246 6 256 6 261.500 10 V33 C256 36 248 36 243 34 C238 38 230 38 226 36 C216 38 204 38 193 36Z"/>
<path d="M211 61 C216 58 222 57 226 57 C230 52 238 50 244 53 C250 54 256 56 258 58 C250 60 240 60 232 61 C224 62 216 62 211 61Z"/>
<path d="M0 22 C3 22 6 24 8 26 C10 26 12 27 13 28.500 C8 29 3 28.500 0 28Z"/>
<path d="M0 56 C4 56 8 59 9 62 C11 63 12 64 12 65 C8 66 3 65.500 0 65Z"/>
<path d="M228 86 C232 82 240 82 244 84 C248 80 256 80 261.500 82 V87 C250 88 238 88 228 86Z"/>
<path d="M45 83 C50 81 56 81 60 83 C54 84 49 84 45 83Z M85 83 C95 80 110 80 128 82 C115 84 98 84 85 83Z" opacity=".85"/>
</g>
<g fill="#d4dcf6" opacity=".75">
<path d="M70 78 C90 70 120 72 140 66 C150 70 162 74 176 79 C140 80 100 79 70 78Z"/>
<path d="M200 36 C214 34 230 34 243 34 C238 38 230 38 226 36 C216 38 206 37 200 36Z"/>
</g>
<!-- far hills / trees -->
<path d="M140 90 C150 86 160 86 172 90Z" fill="#4f97c8"/>
<path d="M236 96 C240 90 246 92 250 88 C254 86 258 86 261.500 84 V98Z" fill="#2f9a22"/>
<!-- field -->
<path d="M0 81 C40 82 100 85 150 89.500 C190 92.500 230 95 261.500 97.500 V147 H0Z" fill="url(#mg)"/>
<path d="M60 86 C100 86 150 90 200 95 C150 93 100 90 60 86Z" fill="#8cf04a" opacity=".6"/>
<ellipse cx="150" cy="105" rx="22" ry="3.500" fill="#2aa60e" opacity=".55"/>
<ellipse cx="250" cy="117" rx="14" ry="3.500" fill="#2aa60e" opacity=".5"/>
<ellipse cx="160" cy="134" rx="22" ry="5" fill="#249408" opacity=".5"/>
<ellipse cx="100" cy="118" rx="16" ry="3" fill="#2aa60e" opacity=".4"/>
<g fill="#e8ffd0"><circle cx="95" cy="107" r=".8"/><circle cx="99" cy="106" r=".8"/><circle cx="103" cy="108" r=".8"/><circle cx="108" cy="107" r=".8"/><circle cx="112" cy="109" r=".8"/><circle cx="117" cy="108" r=".8"/><circle cx="106" cy="105" r=".7"/><circle cx="114" cy="106.500" r=".7"/></g>
<!-- house -->
<path d="M177 86 L187 71.500 L206 73 L222.500 86 L219 87 V95 L180 92.500 V86Z" fill="#7b4123"/>
<path d="M177 86 L187 71.500 L206 73 L222.500 86 L196 84 L189 76 L180.500 87Z" fill="#93532e"/>
<path d="M196 84 L219 86.500 V95 L196 93.500Z" fill="#5e2f18"/>
<rect x="204.500" y="69.500" width="2.200" height="5" fill="#6a3820"/>
<path d="M205.500 69 C206 66 208 64 210 63" stroke="#dfe8fa" stroke-width="1.500" fill="none" opacity=".8"/>
<!-- foreground grass -->
<g fill="#1f7a0a">
<path d="M0 147 V78 C6 95 12 118 18 147Z"/>
<path d="M10 147 C14 120 20 98 30 80 C26 105 24 125 26 147Z"/>
<path d="M22 147 C28 120 34 105 30 86 C38 104 42 124 40 147Z"/>
<path d="M36 147 C44 125 52 110 62 100 C56 116 52 130 52 147Z"/>
<path d="M50 147 C58 132 68 122 80 116 C72 126 68 136 68 147Z"/>
<path d="M66 147 C76 136 88 128 100 126 C92 132 86 140 86 147Z"/>





</g>
<g fill="#36b014">
<path d="M2 147 C8 125 16 108 8 92 C18 108 22 128 20 147Z"/>
<path d="M28 147 C32 122 40 96 52 84 C44 104 40 126 42 147Z" fill="#2c9a10"/>
<path d="M40 147 C50 118 62 96 80 78 C66 100 58 124 56 147Z"/>
<path d="M60 147 C66 134 76 124 90 120 C80 128 76 138 76 147Z"/>
<path d="M108 147 C116 138 126 134 138 136 C130 139 126 143 124 147Z"/>
<path d="M140 147 C150 140 160 138 172 142 C164 143 158 145 156 147Z"/>
</g>
<g stroke="#1f8a0a" stroke-width="1.200" fill="none" opacity=".8"><path d="M74 147 C72 138 70 132 68 129"/><path d="M84 147 C86 140 88 134 90 132"/><path d="M93 147 C92 138 90 133 88 130"/><path d="M104 147 C106 140 108 136 109 134"/><path d="M113 147 C111 140 109 134 107 132"/><path d="M124 147 C126 141 128 137 130 135"/><path d="M190 147 C188 140 186 134 184 132"/><path d="M199 147 C201 140 203 136 205 134"/><path d="M209 147 C208 139 206 133 204 131"/><path d="M219 147 C221 140 223 135 225 133"/><path d="M229 147 C227 140 225 134 223 132"/><path d="M239 147 C240 140 242 136 244 134"/><path d="M249 147 C247 140 245 134 243 132"/></g><g stroke="#5fd62c" stroke-width="1" fill="none" opacity=".9"><path d="M70 147 C72 137 74 130 76 127"/><path d="M78 147 C76 139 74 133 73 131"/><path d="M88 147 C90 138 93 132 95 129"/><path d="M97 147 C96 140 94 135 93 133"/><path d="M108 147 C110 139 114 133 116 131"/><path d="M118 147 C116 140 114 136 112 134"/><path d="M128 147 C130 140 132 134 133 132"/><path d="M140 147 C138 141 136 137 135 135"/><path d="M150 147 C152 140 155 135 157 133"/><path d="M185 147 C187 139 189 133 191 131"/><path d="M194 147 C192 140 190 135 189 133"/><path d="M204 147 C206 138 210 132 212 129"/><path d="M214 147 C212 140 210 134 208 132"/><path d="M224 147 C226 138 228 133 230 130"/><path d="M234 147 C233 140 231 136 230 134"/><path d="M244 147 C246 139 249 133 251 131"/><path d="M254 147 C252 140 250 135 249 133"/></g><path d="M18 147 C28 115 40 86 62 64" stroke="#54c82a" stroke-width="1.400" fill="none"/>
<path d="M40 147 C50 118 62 96 80 78" stroke="#7ae04a" stroke-width=".9" fill="none" opacity=".8"/>
<!-- wheat -->
<path d="M17.500 147 C17 120 17 90 19 66" stroke="#3e9a20" stroke-width="1.300" fill="none"/>
<path d="M21.500 27 C25.500 38 24.500 56 19.500 69 C14.500 62 14 42 21.500 27Z" fill="#79c848"/><path d="M21.500 30 C23.500 40 23 54 19.800 64" stroke="#a6e070" stroke-width="1.600" fill="none" stroke-dasharray="1.500 1.500"/>
<path d="M21.500 28 C22 40 21 56 19.500 68" stroke="#4fa030" stroke-width=".7" fill="none"/>
</g>
</svg>
</div><!-- workflow name -->
<div class="abs" style="left:60.5px;top:122.5px;width:263px;height:47px;border:1px solid #303033;border-radius:9px;background:#171718"></div>
<div class="abs" style="left:76.5px;top:122.5px;line-height:46px;font-size:16.2px;color:#fff;white-space:nowrap;letter-spacing:-.1px">wan2.2-t2v-rapid-aio-example</div>
<svg style="left:300.5px;top:142px" width="10" height="8" viewBox="0 0 10 8"><path d="M1.5 2 L5 5.5 L8.5 2" fill="none" stroke="#fff" stroke-width="1.6"/></svg>
<!-- action bar -->
<div class="abs" style="left:707.5px;top:122px;width:562px;height:47.500px;border:1px solid #2c2c2f;border-radius:9px;background:#171718"></div>
<div class="abs" style="left:724px;top:135px;width:92px;height:23px;border-radius:4px 0 0 4px;background:#1f6592"></div>
<svg style="left:733px;top:139px" width="14" height="14" viewBox="0 0 24 24"><path d="M20.5 11H19V7a2 2 0 0 0-2-2h-4V3.5a2.5 2.5 0 0 0-5 0V5H4a2 2 0 0 0-2 2v3.8h1.5a2.7 2.7 0 0 1 0 5.4H2V20a2 2 0 0 0 2 2h3.8v-1.5a2.7 2.7 0 0 1 5.4 0V22H17a2 2 0 0 0 2-2v-4h1.5a2.5 2.5 0 0 0 0-5z" fill="#fff"/></svg>
<div class="abs" style="left:753px;top:135px;line-height:23px;font-size:13px;color:#fff;-webkit-text-stroke:.4px #fff;letter-spacing:0.05px;-webkit-text-stroke:0;white-space:nowrap">Manager</div>
<div class="abs" style="left:816px;top:135px;width:134px;height:23px;border-radius:0 4px 4px 0;background:#6a6a6a"></div>
<svg style="left:826px;top:140px" width="13" height="13" viewBox="0 0 24 24"><path d="M12 1.5 L15.2 8.6 L23 9.5 L17.2 14.8 L18.8 22.5 L12 18.6 L5.2 22.5 L6.8 14.8 L1 9.5 L8.8 8.6Z" fill="#fff"/></svg>
<svg style="left:858px;top:139px" width="15" height="15" viewBox="0 0 24 24" fill="none" stroke="#fff" stroke-width="2.6" stroke-linecap="round"><path d="M7 13 C7 7 9 4 12.500 4 C16 4 17.500 9 20.500 20 H15.500"/><path d="M12.500 4 C14 8 15 13 15.500 20" stroke-width="1.600"/><circle cx="7" cy="17.500" r="2.600" stroke-width="2.200"/></svg>
<svg style="left:891.5px;top:139px" width="15" height="15" viewBox="0 0 24 24" fill="none" stroke="#fff" stroke-width="2.600" stroke-linecap="round"><path d="M7 13 C7 7 9 4 12.500 4 C16 4 17.500 9 20.500 20 H15.500"/><path d="M12.500 4 C14 8 15 13 15.500 20 L20.500 20 C18 10 16 4 12.500 4Z" fill="#fff" stroke="none"/><circle cx="7" cy="17.500" r="3.400" fill="#fff" stroke="none"/></svg>
<svg style="left:926px;top:140px" width="14" height="13" viewBox="0 0 24 22"><path d="M14 1 L23 9 L14 17 V12.5 C8 12 4 14.5 1.5 20 C2 12 6 6.5 14 5.8Z" fill="#fff"/></svg>
<svg style="left:959.500px;top:141.500px" width="8" height="12" viewBox="0 0 9 13" fill="#b9b9b9"><circle cx="1.6" cy="1.6" r="1.2"/><circle cx="7.2" cy="1.6" r="1.2"/><circle cx="1.6" cy="6.5" r="1.2"/><circle cx="7.2" cy="6.5" r="1.2"/><circle cx="1.6" cy="11.4" r="1.2"/><circle cx="7.2" cy="11.4" r="1.2"/></svg>
<div class="abs" style="left:975px;top:128px;width:142px;height:36px;border-radius:5px 0 0 5px;background:#5ba3f5"></div>
<svg style="left:987px;top:138.5px" width="15" height="15" viewBox="0 0 24 24"><path d="M4.5 2.5 L21 12 L4.5 21.5Z" fill="none" stroke="#111" stroke-width="2.2" stroke-linejoin="round"/></svg>
<div class="abs" style="left:1011px;top:128px;line-height:36px;font-size:14px;color:#18202b;white-space:nowrap;letter-spacing:-.2px">実行する</div>
<svg style="left:1089.5px;top:141.5px" width="15" height="10" viewBox="0 0 15 10"><path d="M1.5 1.5 L7.5 7.8 L13.5 1.5" fill="none" stroke="#111" stroke-width="1.7"/></svg>
<div class="abs" style="left:1117px;top:128px;width:56px;height:36px;border-radius:0 6px 6px 0;background:#0a0a0c;border:1px solid #3c3c40;border-left:none"></div>
<div class="abs" style="left:1129.5px;top:128px;line-height:35px;font-size:16.5px;color:#fff">1</div>
<svg style="left:1154px;top:134px" width="11" height="26" viewBox="0 0 11 26" fill="none" stroke="#a8a8a8" stroke-width="1.4"><path d="M1.5 6.5 L5.5 2.5 L9.5 6.5"/><path d="M1.5 19 L5.5 23 L9.5 19" stroke="#6c6c6c"/></svg>
<div class="abs" style="left:1181px;top:130px;width:32px;height:32px;border-radius:5px;background:#bf353a"></div>
<svg style="left:1191.5px;top:140.5px" width="11" height="11" viewBox="0 0 11 11"><path d="M1 1 L10 10 M10 1 L1 10" stroke="#fff" stroke-width="1.7"/></svg>
<div class="abs" style="left:1221px;top:130px;width:32px;height:32px;border-radius:5px;background:#4b4c50"></div>
<svg style="left:1229px;top:138px" width="16" height="16" viewBox="0 0 24 24" fill="none" stroke="#77787d" stroke-width="2.2" stroke-linecap="round" stroke-linejoin="round"><path d="M3 12a9 9 0 1 0 9-9 9.7 9.7 0 0 0-6.7 2.7L3 8"/><path d="M3 3v5h5M12 7v5l4 2"/></svg>

<!-- job panel -->
<div class="abs" style="left:920px;top:174px;width:350px;height:265.5px;border:1px solid #2c2c2f;border-radius:9px;background:#171718"></div>
<div class="abs" style="left:921px;top:222px;width:348px;height:1px;background:#2c2c2f"></div>
<div class="abs" style="left:936.5px;top:188px;line-height:22px;font-size:14.2px;-webkit-text-stroke:.4px #fff;color:#fff;letter-spacing:0.1px;white-space:nowrap">1 active jobs</div>
<svg style="left:1242px;top:197px" width="13" height="4" viewBox="0 0 13 4" fill="#d8d8d8"><circle cx="1.6" cy="2" r="1.3"/><circle cx="6.5" cy="2" r="1.3"/><circle cx="11.4" cy="2" r="1.3"/></svg>
<div class="abs" style="left:933px;top:239.5px;width:253px;height:31.5px;border-radius:8px;background:#252629"></div>
<svg style="left:1014px;top:247.5px" width="15" height="15" viewBox="0 0 24 24" fill="none" stroke="#fff" stroke-width="2" stroke-linecap="round" stroke-linejoin="round"><path d="M10.3 21H5a2 2 0 0 1-2-2V5a2 2 0 0 1 2-2h14a2 2 0 0 1 2 2v10l-3.1-3.1a2 2 0 0 0-2.8 0L11 16"/><path d="M4 17.5 l1.6-.6 .6-1.6 .6 1.6 1.6.6-1.6.6-.6 1.6-.6-1.6z"/><circle cx="9" cy="9" r="2"/></svg>
<div class="abs" style="left:1033.5px;top:239.5px;line-height:31px;font-size:12.4px;-webkit-text-stroke:.4px #fff;color:#fff;letter-spacing:0.1px;white-space:nowrap">Show assets</div>
<div class="abs" style="left:1201.5px;top:239.5px;line-height:31px;font-size:12.4px;-webkit-text-stroke:.4px #fff;color:#fff;letter-spacing:0.25px;white-space:nowrap">0 <span style="color:#f0f0f0">queued</span></div>
<div class="abs" style="left:933px;top:287.5px;width:59px;height:23.5px;border-radius:8px;background:#252629"></div>
<div class="abs" style="left:946px;top:287.5px;line-height:23px;font-size:12px;color:#fff;white-space:nowrap">すべて</div>
<div class="abs" style="left:1007.5px;top:287.5px;line-height:23px;font-size:12px;color:#8b8b8e;white-space:nowrap">完了</div>
<div class="abs" style="left:1201px;top:287.5px;width:24.5px;height:23.5px;border-radius:6px;background:#252629"></div>
<svg style="left:1206.5px;top:293.5px" width="13" height="12" viewBox="0 0 13 12" stroke="#fff" stroke-width="1.3" stroke-linecap="round"><path d="M.8 1.5 H12.2 M3 6 H10 M5.2 10.5 H7.8"/></svg>
<div class="abs" style="left:1233px;top:287.5px;width:24.5px;height:23.5px;border-radius:6px;background:#252629"></div>
<svg style="left:1238.5px;top:293px" width="13" height="13" viewBox="0 0 13 13" fill="none" stroke="#fff" stroke-width="1.3" stroke-linecap="round" stroke-linejoin="round"><path d="M3.5 12 V1.2 M.8 3.9 L3.5 1.2 L6.2 3.9 M9.5 1 V11.8 M6.8 9.1 L9.5 11.8 L12.2 9.1"/></svg>
<div class="abs" style="left:933px;top:325px;line-height:17px;font-size:11.5px;color:#8b8b8e;white-space:nowrap">今日</div>
<div class="abs" style="left:933px;top:348px;width:324.5px;height:32.5px;border-radius:8px;background:#252629;overflow:hidden"><div class="abs" style="left:0;top:0;width:162px;height:33px;background:#1e68a3"></div></div>
<svg style="left:942.5px;top:357px" width="14" height="15" viewBox="0 0 24 24" fill="none" stroke="#fff" stroke-width="2" stroke-linejoin="round"><path d="M13 2 L4 14 H12 L11 22 L20 10 H12Z"/></svg>
<div class="abs" style="left:970px;top:349px;line-height:32.5px;font-size:12.4px;-webkit-text-stroke:.4px #fff;color:#fff;letter-spacing:0.25px;white-space:nowrap">Total: 50%</div>
<div class="abs" style="left:1227.5px;top:352px;width:24.5px;height:24px;border-radius:6px;background:#c4383d"></div>
<svg style="left:1235px;top:359.5px" width="9.5" height="9.5" viewBox="0 0 10 10"><path d="M1 1 L9 9 M9 1 L1 9" stroke="#fff" stroke-width="1.5"/></svg>
<div class="abs" style="left:933px;top:390px;width:324.5px;height:32.5px;border-radius:8px;background:#252629"></div>
<svg style="left:942px;top:400px" width="16" height="12" viewBox="0 0 16 12" fill="none" stroke="#fff" stroke-width="1.4" stroke-linecap="round" stroke-linejoin="round"><path d="M.8 7 L3.6 9.8 L10 2.2 M7 9 L7.8 9.8 L14.8 2.2"/></svg>
<div class="abs" style="left:970px;top:391px;line-height:32.5px;font-size:12.4px;-webkit-text-stroke:.4px #fff;color:#fff;letter-spacing:0.12px;white-space:nowrap">AnimateDiff_00012.mp4</div>
<div class="abs" style="right:30.5px;top:391px;line-height:32.5px;font-size:12px;color:#8b8b8e;white-space:nowrap">512.98s</div>

<!-- minimap panel -->
<div class="abs" style="left:1017px;top:814px;width:253px;height:200px;border:1px solid #2c2c2f;border-radius:9px;background:#171718"></div>
<div class="abs" style="left:1018px;top:851px;width:251px;height:1px;background:#2c2c2f"></div>
<svg style="left:1034.5px;top:827.5px" width="14" height="14" viewBox="0 0 14 14" fill="none" stroke="#d8d8d8" stroke-width="1.3" stroke-linecap="round"><circle cx="3.2" cy="3.4" r="2.1"/><path d="M5.5 3.4 H13"/><circle cx="10.8" cy="10.6" r="2.1"/><path d="M1 10.6 H8.5"/></svg>
<svg style="left:1239.5px;top:829px" width="11" height="11" viewBox="0 0 11 11"><path d="M1 1 L10 10 M10 1 L1 10" stroke="#e0e0e0" stroke-width="1.3"/></svg>
<div class="abs" style="left:1083px;top:857.5px;width:141px;height:110.5px;border:2px solid #fff;background:#474747"></div>
<svg style="left:1083px;top:857.5px" width="141" height="110" viewBox="0 0 141 110">

<g fill="#3c82bb"><rect x="9.5" y="28" width="37" height="10"/><rect x="11.5" y="43" width="36" height="8"/><rect x="12" y="55.5" width="36" height="7.5"/><rect x="21.5" y="68" width="24.5" height="11.5"/><rect x="52.500" y="41" width="24.500" height="5"/><rect x="52.500" y="51" width="24.500" height="42.500"/><rect x="80.500" y="18.500" width="13.500" height="4.500"/><rect x="80" y="27" width="31" height="47.500"/></g>
<g stroke="#9a9a9a" stroke-width=".8" opacity=".8" fill="none"><path d="M46.5 30.5 L82 19.5 M46.5 30.5 L52.5 40 M46.5 30.5 C30 40 20 50 12 56.5 M46.5 30.5 C30 38 20 42 12 44.5 M48 44.5 L52.5 59 M48 56.5 L52.5 59 M46 70.5 L52.5 59 M77 42 L52.5 59 M77.5 59 L81 36 L82 19.5 M94 19.5 L81 36"/></g></svg>
<!-- bottom toolbar -->
<div class="abs" style="left:1017px;top:1018px;width:253px;height:60px;border:1px solid #2c2c2f;border-radius:9px;background:#171718"></div>
<div class="abs" style="left:1025px;top:1027px;width:32px;height:32px;border-radius:8px;background:#39393b"></div>
<svg style="left:1033.5px;top:1035.5px" width="15" height="15" viewBox="0 0 24 24" fill="none" stroke="#fff" stroke-width="2" stroke-linejoin="round"><path d="M3.5 3.5 L21 10.5 L13.2 13.2 L10.5 21Z"/></svg>
<svg style="left:1063.5px;top:1039.5px" width="11" height="8" viewBox="0 0 11 8"><path d="M1.2 1.5 L5.5 5.8 L9.800 1.5" fill="none" stroke="#e8e8e8" stroke-width="1.5"/></svg>
<div class="abs" style="left:1083px;top:1031px;width:1px;height:25px;background:#343437"></div>
<svg style="left:1096.5px;top:1035.500px" width="15" height="15" viewBox="0 0 24 24" fill="none" stroke="#e8e8e8" stroke-width="2" stroke-linecap="round" stroke-linejoin="round"><circle cx="12" cy="12" r="2.600"/><path d="M3 7V5a2 2 0 0 1 2-2h2M17 3h2a2 2 0 0 1 2 2v2M21 17v2a2 2 0 0 1-2 2h-2M7 21H5a2 2 0 0 1-2-2v-2"/></svg>
<div class="abs" style="left:1131.500px;top:1027px;line-height:32px;font-size:12.400px;color:#fff;white-space:nowrap;letter-spacing:-.3px">81%</div>
<svg style="left:1162.500px;top:1039.500px" width="11" height="8" viewBox="0 0 11 8"><path d="M1.2 1.5 L5.5 5.8 L9.800 1.5" fill="none" stroke="#e8e8e8" stroke-width="1.5"/></svg>
<div class="abs" style="left:1188.500px;top:1031px;width:1px;height:25px;background:#343437"></div>
<div class="abs" style="left:1193px;top:1027px;width:32px;height:32px;border-radius:8px;background:#39393b"></div>
<svg style="left:1201px;top:1035px" width="16" height="16" viewBox="0 0 24 24" fill="none" stroke="#fff" stroke-width="2" stroke-linejoin="round"><path d="M2.500 6 L8.500 3.500 L15.500 6 L21.500 3.500 V18 L15.500 20.500 L8.500 18 L2.500 20.500Z M8.500 3.500 V18 M15.500 6 V20.500"/></svg>
<svg style="left:1237px;top:1035px" width="16" height="16" viewBox="0 0 24 24" fill="none" stroke="#e8e8e8" stroke-width="2" stroke-linecap="round" stroke-linejoin="round"><circle cx="18" cy="4.500" r="2.500"/><circle cx="5" cy="19" r="2.500"/><path d="M2 2 L22 22"/><path d="M2.500 6 C8 6 10 8 12 10.500 M15.500 4.500 C13 5 12 6 11 7.500 M8 19 C13 19 15 17 16 14 M14 13 C17 16 19 17.500 22 17.500"/></svg>

<!-- stats -->
<div class="abs" style="left:61px;top:996px;font-size:9.9px;line-height:12.97px;color:#8e8e8e;white-space:pre">T: 0.00s
I: 0
N: 8 [8]
V: 19
FPS:60.61</div>
</div></div>
  <div id="side">
    <div class="abs" style="left:10px;top:14px;width:32px;height:32px;border-radius:8px;background:#000"></div>
    <svg style="left:15px;top:19px" width="22" height="22" viewBox="0 0 18 18"><path d="M7.2 1.5 H16.2 L14.8 6 H9.2 L8.2 8.6 H5.6 L4.7 11.4 H7.3 L6.6 13.2 H12.4 L11 16.5 H2.6 L4 12.6 H1.6 L3.6 6.6 H5.6Z" fill="#fff"/></svg>
    <!-- image sparkle -->
    <svg style="left:16px;top:68px" width="20" height="20" viewBox="0 0 24 24" fill="none" stroke="#c6c6c6" stroke-width="1.8" stroke-linecap="round" stroke-linejoin="round"><path d="M10.3 21H5a2 2 0 0 1-2-2V5a2 2 0 0 1 2-2h14a2 2 0 0 1 2 2v10l-3.1-3.1a2 2 0 0 0-2.8 0L11 16"/><path d="M4 17.5 l1.6-.6 .6-1.6 .6 1.6 1.6.6-1.6.6-.6 1.6-.6-1.6z"/><circle cx="9" cy="9" r="2"/></svg>
    <!-- node -->
    <svg style="left:15px;top:115px" width="22" height="20" viewBox="0 0 24 22" fill="none" stroke="#c6c6c6" stroke-width="1.8" stroke-linecap="round" stroke-linejoin="round"><path d="M15 6H10a3 3 0 0 0-3 3v4a3 3 0 0 0 3 3h5a3 3 0 0 0 3-3V9"/><path d="M2 11h5M13 11h9"/></svg>
    <!-- blocks sparkle -->
    <svg style="left:15px;top:164px" width="21" height="21" viewBox="0 0 24 24" fill="none" stroke="#c6c6c6" stroke-width="1.8" stroke-linecap="round" stroke-linejoin="round"><rect x="3" y="5.5" width="6" height="6" rx="1.5"/><rect x="3" y="15" width="6" height="6" rx="1.5"/><rect x="12.5" y="15" width="6" height="6" rx="1.5"/><path d="M17 2.5 l1.2 3 3 1.2-3 1.2-1.2 3-1.2-3-3-1.2 3-1.2z"/></svg>
    <!-- workflow -->
    <svg style="left:15px;top:211px" width="21" height="21" viewBox="0 0 24 24" fill="none" stroke="#c6c6c6" stroke-width="1.8" stroke-linecap="round" stroke-linejoin="round"><rect x="3" y="3" width="7" height="7" rx="2.5"/><rect x="14" y="3" width="7" height="6" rx="2.5"/><rect x="14" y="15" width="7" height="6" rx="2.5"/><path d="M6.5 10v4a4 4 0 0 0 4 4H14M10 6.5h4"/></svg>
    <!-- templates -->
    <svg style="left:15px;top:259px" width="21" height="21" viewBox="0 0 24 24" fill="none" stroke="#c6c6c6" stroke-width="1.8" stroke-linecap="round" stroke-linejoin="round"><rect x="3" y="3" width="18" height="7" rx="2.5"/><rect x="3" y="14" width="7" height="7" rx="2.5"/><rect x="14" y="14" width="7" height="7" rx="2.5"/></svg>
    <!-- help -->
    <svg style="left:16px;top:772px" width="20" height="20" viewBox="0 0 24 24" fill="none" stroke="#c6c6c6" stroke-width="1.8" stroke-linecap="round" stroke-linejoin="round"><circle cx="12" cy="12" r="9.5"/><path d="M9.1 9a3 3 0 0 1 5.8 1c0 2-3 2.6-3 4.2"/><circle cx="12" cy="17.3" r=".4" fill="#c6c6c6"/></svg>
    <!-- terminal -->
    <svg style="left:16px;top:820px" width="20" height="20" viewBox="0 0 24 24" fill="none" stroke="#c6c6c6" stroke-width="2" stroke-linecap="round" stroke-linejoin="round"><path d="M3 5l8 6-8 6M11 18h10"/></svg>
    <!-- keyboard -->
    <svg style="left:16px;top:867px" width="20" height="20" viewBox="0 0 24 24" fill="none" stroke="#c6c6c6" stroke-width="1.8" stroke-linecap="round" stroke-linejoin="round"><rect x="1.5" y="4" width="21" height="16" rx="2.5"/><path d="M7 15.5h10" stroke-width="2.2"/><path d="M6.5 9h.1M10 9h.1M14 9h.1M17.5 9h.1M8.2 12h.1M12 12h.1M15.8 12h.1" stroke-width="2"/></svg>
    <!-- settings -->
    <svg style="left:15px;top:915px" width="21" height="21" viewBox="0 0 24 24" fill="none" stroke="#c6c6c6" stroke-width="1.9" stroke-linecap="round" stroke-linejoin="round"><path d="M12.22 2h-.44a2 2 0 0 0-2 2v.18a2 2 0 0 1-1 1.73l-.43.25a2 2 0 0 1-2 0l-.15-.08a2 2 0 0 0-2.73.73l-.22.38a2 2 0 0 0 .73 2.73l.15.1a2 2 0 0 1 1 1.72v.51a2 2 0 0 1-1 1.74l-.15.09a2 2 0 0 0-.73 2.73l.22.38a2 2 0 0 0 2.73.73l.15-.08a2 2 0 0 1 2 0l.43.25a2 2 0 0 1 1 1.73V20a2 2 0 0 0 2 2h.44a2 2 0 0 0 2-2v-.18a2 2 0 0 1 1-1.73l.43-.25a2 2 0 0 1 2 0l.15.08a2 2 0 0 0 2.73-.73l.22-.39a2 2 0 0 0-.73-2.73l-.15-.08a2 2 0 0 1-1-1.74v-.5a2 2 0 0 1 1-1.74l.15-.09a2 2 0 0 0 .73-2.73l-.22-.38a2 2 0 0 0-2.73-.73l-.15.08a2 2 0 0 1-2 0l-.43-.25a2 2 0 0 1-1-1.73V4a2 2 0 0 0-2-2z"/><circle cx="12" cy="12" r="3"/></svg>
  </div>
</div>
<div id="tm">
<div id="tmtitle"></div><div id="tmbar"></div>
<svg style="left:417px;top:8px" width="10" height="2" viewBox="0 0 10 2"><path d="M0 1 H10" stroke="#9a9a9a" stroke-width="1"/></svg>
<svg style="left:462px;top:3px" width="10" height="10" viewBox="0 0 10 10"><rect x=".5" y=".5" width="9" height="9" rx="1" fill="none" stroke="#8a8a8a" stroke-width="1"/></svg>
<svg style="left:508px;top:3px" width="10" height="10" viewBox="0 0 10 10"><path d="M0 0 L10 10 M10 0 L0 10" stroke="#8a8a8a" stroke-width="1"/></svg>
<svg style="left:337px;top:63px" width="16" height="15" viewBox="0 0 16 15" fill="none" stroke="#1b1b1b" stroke-width="1.1"><path d="M9 13.5 H2.5 a1.5 1.5 0 0 1-1.5-1.5 V2.5 a1.5 1.5 0 0 1 1.5-1.500 H11 a1.5 1.5 0 0 1 1.5 1.5 V7 M1 6.500 H7 M7 1 V13.500"/><circle cx="11.800" cy="10.800" r="3.700" fill="#1b1b1b" stroke="none"/><path d="M11.800 8.800 V12.800 M9.800 10.800 H13.800" stroke="#fff" stroke-width="1.100"/></svg>
<div class="tl" style="left:361px;top:61px;line-height:19px;font-size:12px;color:#1b1b1b"><span style="font-feature-settings:'palt';letter-spacing:-1.23px">新しいタスクを実行する</span></div>
<div class="abs" style="left:485.5px;top:56px;width:1px;height:28px;background:#e9e9e9"></div>
<svg style="left:502px;top:69px" width="16" height="4" viewBox="0 0 16 4" fill="#1b1b1b"><circle cx="2" cy="2" r="1.400"/><circle cx="8" cy="2" r="1.400"/><circle cx="14" cy="2" r="1.400"/></svg>
<div class="tl" style="right:12.5px;top:121px;line-height:24px;font-size:15.400px;letter-spacing:-.09px;color:#1b1b1b">Intel(R) Arc(TM) Pro B60 Graphics</div>
<div class="tl" style="right:296px;top:153px;color:#6b6b6b;font-size:11.400px;line-height:16px;font-size:10.500px">0%</div>
<svg style="left:234.5px;top:158px" width="8" height="6" viewBox="0 0 8 6"><path d="M.8 1 L4 4.300 L7.200 1" fill="none" stroke="#6b6b6b" stroke-width="1"/></svg>
<div class="tl" style="left:247px;top:153px;color:#6b6b6b;font-size:11.400px;line-height:16px;font-size:12.400px">Copy</div>
<div class="tl" style="right:14px;top:153px;color:#6b6b6b;font-size:11.400px;line-height:16px;font-size:10.500px">10%</div>
<div class="chart" style="left:-46.0px;top:174.0px;width:272.0px;height:256.0px"><svg style="left:-1px;top:-1px" width="272.0" height="256.0"><path d="M73.5 0 V256.0 M119.5 0 V256.0 M165.5 0 V256.0 M211.5 0 V256.0 M257.5 0 V256.0 M0 25.6 H272.0 M0 51.2 H272.0 M0 76.8 H272.0 M0 102.4 H272.0 M0 128.0 H272.0 M0 153.6 H272.0 M0 179.2 H272.0 M0 204.8 H272.0 M0 230.4 H272.0 " stroke="#e9e9e9" stroke-width="1" fill="none"/></svg></div>
<div class="chart" style="left:234.0px;top:174.0px;width:274.0px;height:256.0px"><svg style="left:-1px;top:-1px" width="274.0" height="256.0"><polygon points="0,256.0 0.2,129.4 5.1,2.7 9.6,255.3 14.0,255.3 19.5,2.7 28.1,2.7 32.6,7.1 37.2,20.7 42.4,169.6 46.6,2.7 74.5,2.7 79.5,15.3 83.4,255.3 88.6,2.7 93.6,195.6 97.3,2.7 102.5,255.3 106.9,2.7 111.6,3.2 116.5,7.1 120.2,16.5 124.7,5.9 130.1,3.2 134.8,255.3 139.4,2.7 143.4,2.7 153.7,255.3 157.2,255.3 162.4,2.7 167.6,255.3 171.5,2.7 176.7,255.3 180.2,255.3 185.4,2.7 190.3,2.7 194.7,255.3 199.2,2.7 204.4,255.3 208.8,2.7 213.3,2.7 217.7,255.3 222.6,2.7 231.3,2.7 236.7,255.3 241.4,2.7 245.6,255.3 250.6,2.7 254.3,25.6 259.2,2.7 268.3,2.7 270.3,25.6 274.0,178.8 274.0,256.0" fill="#e4d0fb"/><g opacity=".55"><path d="M28.4 0 V256.0 M74.4 0 V256.0 M120.5 0 V256.0 M166.5 0 V256.0 M212.5 0 V256.0 M258.6 0 V256.0 M0 25.6 H274.0 M0 51.2 H274.0 M0 76.8 H274.0 M0 102.4 H274.0 M0 128.0 H274.0 M0 153.6 H274.0 M0 179.2 H274.0 M0 204.8 H274.0 M0 230.4 H274.0 " stroke="#e9e9e9" stroke-width="1" fill="none"/></g><polyline points="0.2,129.4 5.1,2.7 9.6,255.3 14.0,255.3 19.5,2.7 28.1,2.7 32.6,7.1 37.2,20.7 42.4,169.6 46.6,2.7 74.5,2.7 79.5,15.3 83.4,255.3 88.6,2.7 93.6,195.6 97.3,2.7 102.5,255.3 106.9,2.7 111.6,3.2 116.5,7.1 120.2,16.5 124.7,5.9 130.1,3.2 134.8,255.3 139.4,2.7 143.4,2.7 153.7,255.3 157.2,255.3 162.4,2.7 167.6,255.3 171.5,2.7 176.7,255.3 180.2,255.3 185.4,2.7 190.3,2.7 194.7,255.3 199.2,2.7 204.4,255.3 208.8,2.7 213.3,2.7 217.7,255.3 222.6,2.7 231.3,2.7 236.7,255.3 241.4,2.7 245.6,255.3 250.6,2.7 254.3,25.6 259.2,2.7 268.3,2.7 270.3,25.6 274.0,178.8" fill="none" stroke="#7a33cc" stroke-width="1.1" stroke-linejoin="round"/></svg></div>
<div class="tl" style="left:4px;top:438px;color:#6b6b6b;font-size:11.400px;line-height:16px;font-size:12.400px">Decode</div>
<div class="tl" style="right:296px;top:438px;color:#6b6b6b;font-size:11.400px;line-height:16px;font-size:10.500px">0%</div>
<svg style="left:234.5px;top:442px" width="8" height="6" viewBox="0 0 8 6"><path d="M.8 1 L4 4.300 L7.200 1" fill="none" stroke="#6b6b6b" stroke-width="1"/></svg>
<div class="tl" style="left:247px;top:438px;color:#6b6b6b;font-size:11.400px;line-height:16px;font-size:12.400px">Video Processing</div>
<div class="tl" style="right:14px;top:438px;color:#6b6b6b;font-size:11.400px;line-height:16px;font-size:10.500px">0%</div>
<div class="chart" style="left:-46.0px;top:458.0px;width:272.0px;height:256.0px"><svg style="left:-1px;top:-1px" width="272.0" height="256.0"><path d="M68.5 0 V256.0 M114.5 0 V256.0 M160.5 0 V256.0 M206.5 0 V256.0 M252.5 0 V256.0 M0 25.6 H272.0 M0 51.2 H272.0 M0 76.8 H272.0 M0 102.4 H272.0 M0 128.0 H272.0 M0 153.6 H272.0 M0 179.2 H272.0 M0 204.8 H272.0 M0 230.4 H272.0 " stroke="#e9e9e9" stroke-width="1" fill="none"/></svg></div>
<div class="chart" style="left:234.0px;top:458.0px;width:274.0px;height:256.0px"><svg style="left:-1px;top:-1px" width="274.0" height="256.0"><path d="M23.5 0 V256.0 M69.6 0 V256.0 M115.7 0 V256.0 M161.8 0 V256.0 M207.9 0 V256.0 M254.0 0 V256.0 M0 25.6 H274.0 M0 51.2 H274.0 M0 76.8 H274.0 M0 102.4 H274.0 M0 128.0 H274.0 M0 153.6 H274.0 M0 179.2 H274.0 M0 204.8 H274.0 M0 230.4 H274.0 " stroke="#e9e9e9" stroke-width="1" fill="none"/></svg></div>
<div class="tl" style="left:0.5px;top:724px;color:#6b6b6b;font-size:11.400px;line-height:16px;font-size:12px;letter-spacing:-3px">メモリ</div>
<div class="tl" style="right:14px;top:724px;color:#6b6b6b;font-size:11.400px;line-height:16px;font-size:10.500px">24.0 GB</div>
<div class="chart" style="left:-46.0px;top:741.2px;width:556.0px;height:66.4px"><svg style="left:-1px;top:-1px" width="556.0" height="66.4"><rect x="0" y="18.200" width="560" height="60" fill="#e4d0fb"/><g opacity=".6"><path d="M82.5 0 V66.4 M120.2 0 V66.4 M158.0 0 V66.4 M195.8 0 V66.4 M233.5 0 V66.4 M271.2 0 V66.4 M309.0 0 V66.4 M346.8 0 V66.4 M384.5 0 V66.4 M422.2 0 V66.4 M460.0 0 V66.4 M497.8 0 V66.4 M535.5 0 V66.4 M0 5.1 H556.0 M0 10.2 H556.0 M0 15.3 H556.0 M0 20.4 H556.0 M0 25.5 H556.0 M0 30.6 H556.0 M0 35.8 H556.0 M0 40.9 H556.0 M0 46.0 H556.0 M0 51.1 H556.0 M0 56.2 H556.0 M0 61.3 H556.0 " stroke="#e9e9e9" stroke-width="1" fill="none"/></g><path d="M0 18.200 H560" stroke="#7a33cc" stroke-width="1.200"/></svg></div>
<div class="tl" style="left:0.5px;top:811px;color:#6b6b6b;font-size:11.400px;line-height:16px;font-size:12px;letter-spacing:-3px">メモリ</div>
<div class="tl" style="right:14px;top:811px;color:#6b6b6b;font-size:11.400px;line-height:16px;font-size:10.500px">15.9 GB</div>
<div class="chart" style="left:-46.0px;top:828.5px;width:556.0px;height:66.1px"><svg style="left:-1px;top:-1px" width="556.0" height="66.1"><path d="M82.5 0 V66.1 M120.2 0 V66.1 M158.0 0 V66.1 M195.8 0 V66.1 M233.5 0 V66.1 M271.2 0 V66.1 M309.0 0 V66.1 M346.8 0 V66.1 M384.5 0 V66.1 M422.2 0 V66.1 M460.0 0 V66.1 M497.8 0 V66.1 M535.5 0 V66.1 M0 5.1 H556.0 M0 10.2 H556.0 M0 15.3 H556.0 M0 20.3 H556.0 M0 25.4 H556.0 M0 30.5 H556.0 M0 35.6 H556.0 M0 40.7 H556.0 M0 45.8 H556.0 M0 50.8 H556.0 M0 55.9 H556.0 M0 61.0 H556.0 " stroke="#eeeeee" stroke-width="1" fill="none"/></svg></div>
<div class="tl" style="left:81.5px;top:906.500px;color:#6b6b6b;font-size:11.600px;line-height:16px;font-size:12px"><span style="font-feature-settings:'palt';letter-spacing:-1.08px">専用 GPU メモリ</span></div>
<div class="tl" style="left:81px;top:926px;color:#111;font-size:19.200px;line-height:24px;letter-spacing:0px">17.8/24.0 GB</div>
<div class="tl" style="left:81.5px;top:957.500px;color:#6b6b6b;font-size:11.600px;line-height:16px;font-size:12px"><span style="font-feature-settings:'palt';letter-spacing:-1.08px">共有 GPU メモリ</span></div>
<div class="tl" style="left:81px;top:977px;color:#111;font-size:19.200px;line-height:24px;letter-spacing:0px">0.1/15.9 GB</div>
<div class="tl" style="right:462.20000000000005px;top:977px;color:#111;font-size:19.200px;line-height:24px;letter-spacing:0px">39.9 GB</div>
<div class="tl" style="left:81.5px;top:1008.500px;color:#6b6b6b;font-size:11.600px;line-height:16px">温度</div>
<div class="tl" style="left:81px;top:1028px;color:#111;font-size:19.200px;line-height:24px;letter-spacing:0px">50 °C</div>
<div class="tl" style="left:204.5px;top:906.6px;color:#6b6b6b;font-size:12px;line-height:16px"><span style="font-feature-settings:'palt';letter-spacing:-1.88px">ドライバーのバージョン:</span></div>
<div class="tl" style="left:344px;top:906.6px;color:#1b1b1b;font-size:11.300px;line-height:16px;letter-spacing:-.2px">32.0.101.6862</div>
<div class="tl" style="left:204.5px;top:924.8px;color:#6b6b6b;font-size:12px;line-height:16px"><span style="font-feature-settings:'palt';letter-spacing:-1.38px">ドライバーの日付:</span></div>
<div class="tl" style="left:344px;top:924.8px;color:#1b1b1b;font-size:11.300px;line-height:16px;letter-spacing:-.2px">2025/06/04</div>
<div class="tl" style="left:204.5px;top:942.8px;color:#6b6b6b;font-size:12px;line-height:16px"><span style="font-feature-settings:'palt';letter-spacing:-0.87px">DirectX バージョン:</span></div>
<div class="tl" style="left:344px;top:942.8px;color:#1b1b1b;font-size:11.300px;line-height:16px;letter-spacing:-.2px">12 (FL 12.1)</div>
<div class="tl" style="left:204.5px;top:960.7px;color:#6b6b6b;font-size:12px;line-height:16px"><span style="font-feature-settings:'palt';letter-spacing:-0.26px">物理的な場所:</span></div>
<div class="tl" style="left:344px;top:960.7px;color:#1b1b1b;font-size:11.300px;line-height:16px;letter-spacing:-.2px"><span style="font-feature-settings:'palt';letter-spacing:-0.45px">PCI バス 8, デバイス 0, 機能 0</span></div>
<div class="tl" style="left:204.5px;top:978.6px;color:#6b6b6b;font-size:12px;line-height:16px"><span style="font-feature-settings:'palt';letter-spacing:-1.6px">ハードウェア予約済みメモリ:</span></div>
<div class="tl" style="left:344px;top:978.6px;color:#1b1b1b;font-size:11.300px;line-height:16px;letter-spacing:-.2px">196 MB</div>
<div class="abs" style="left:0;top:0;width:30px;height:1068px;background:linear-gradient(to right,rgba(0,0,0,.13),rgba(0,0,0,.06) 25%,rgba(0,0,0,.02) 60%,rgba(0,0,0,0))"></div>
</div>
</body>
</html>
